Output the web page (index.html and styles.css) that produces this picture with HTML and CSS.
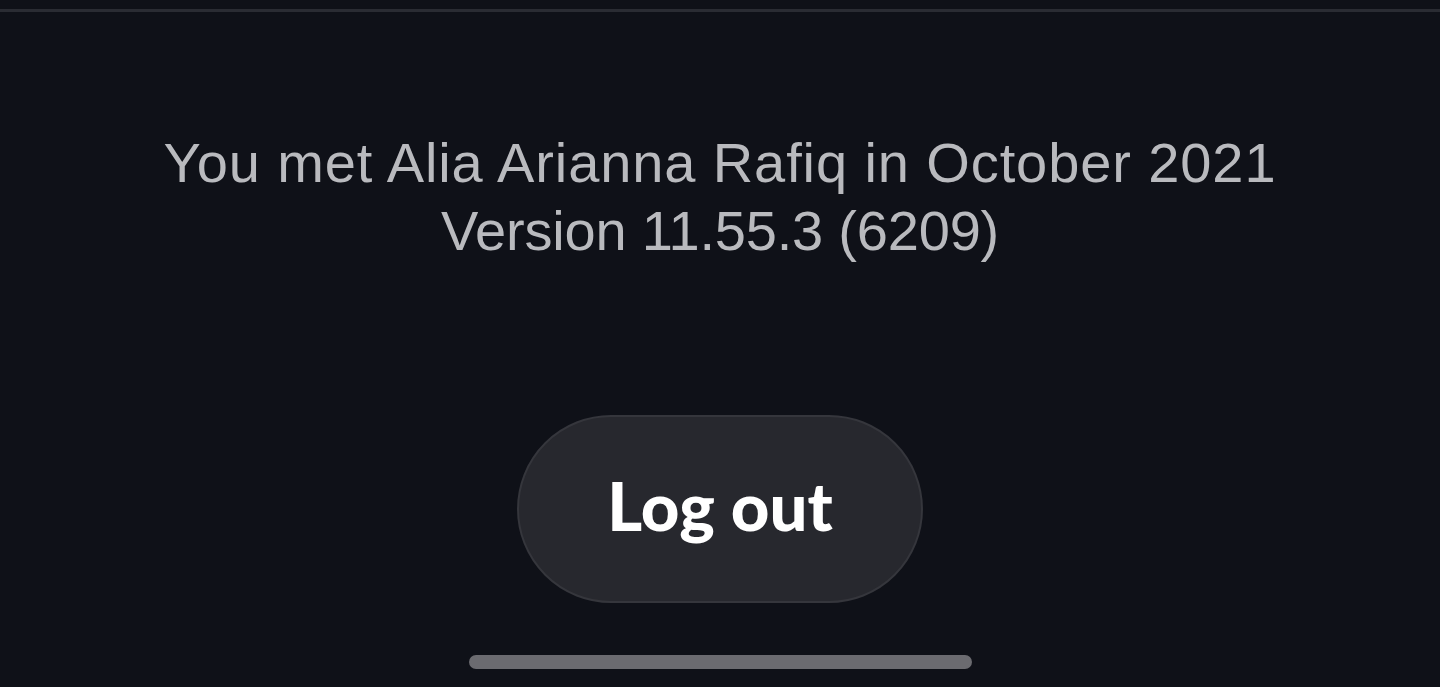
FILE: index.html
```html
<!DOCTYPE html>
<html lang="en">
  <head>
    <meta charset="UTF-8" />
    <meta name="viewport" content="width=device-width, initial-scale=1.0" />
    <title>Settings</title>
    <link rel="stylesheet" href="styles.css">
  </head>
  <body>
    <div class="screen">
      <div class="divider"></div>
      <div class="about">
        <p class="met-line">You met Alia Arianna Rafiq in October 2021</p>
        <p class="version-line">Version 11.55.3 (6209)</p>
      </div>
      <button class="logout-btn">Log out</button>
      <div class="home-indicator"></div>
    </div>
  </body>
</html>
```

FILE: styles.css
```css
/* styles.css */
body {
  margin: 0;
  background-color: #0f1118;
  font-family: "Liberation Sans", Arial, sans-serif;
}

.screen {
  height: 687px;
  display: flex;
  flex-direction: column;
  align-items: center;
  overflow: hidden;
}

.divider {
  width: 100%;
  height: 3px;
  margin-top: 9px;
  background-color: #2a2c33;
}

.about {
  margin-top: 117px;
  text-align: center;
  color: #b9babe;
  font-size: 56px;
  line-height: 68px;
}

.about p {
  margin: 0;
}

.met-line {
  letter-spacing: 0.9px;
}

.version-line {
  letter-spacing: -0.2px;
}

.logout-btn {
  margin-top: 150px;
  padding: 0 0 8px 0;
  width: 406px;
  height: 188px;
  border: 2px solid #35363c;
  border-radius: 94px;
  background-color: #27282e;
  color: #ffffff;
  font-family: Lato, sans-serif;
  font-weight: 900;
  font-size: 67px;
  cursor: pointer;
}

.home-indicator {
  margin-top: 52px;
  width: 503px;
  height: 14px;
  border-radius: 7px;
  background-color: #6b6b70;
}
```
